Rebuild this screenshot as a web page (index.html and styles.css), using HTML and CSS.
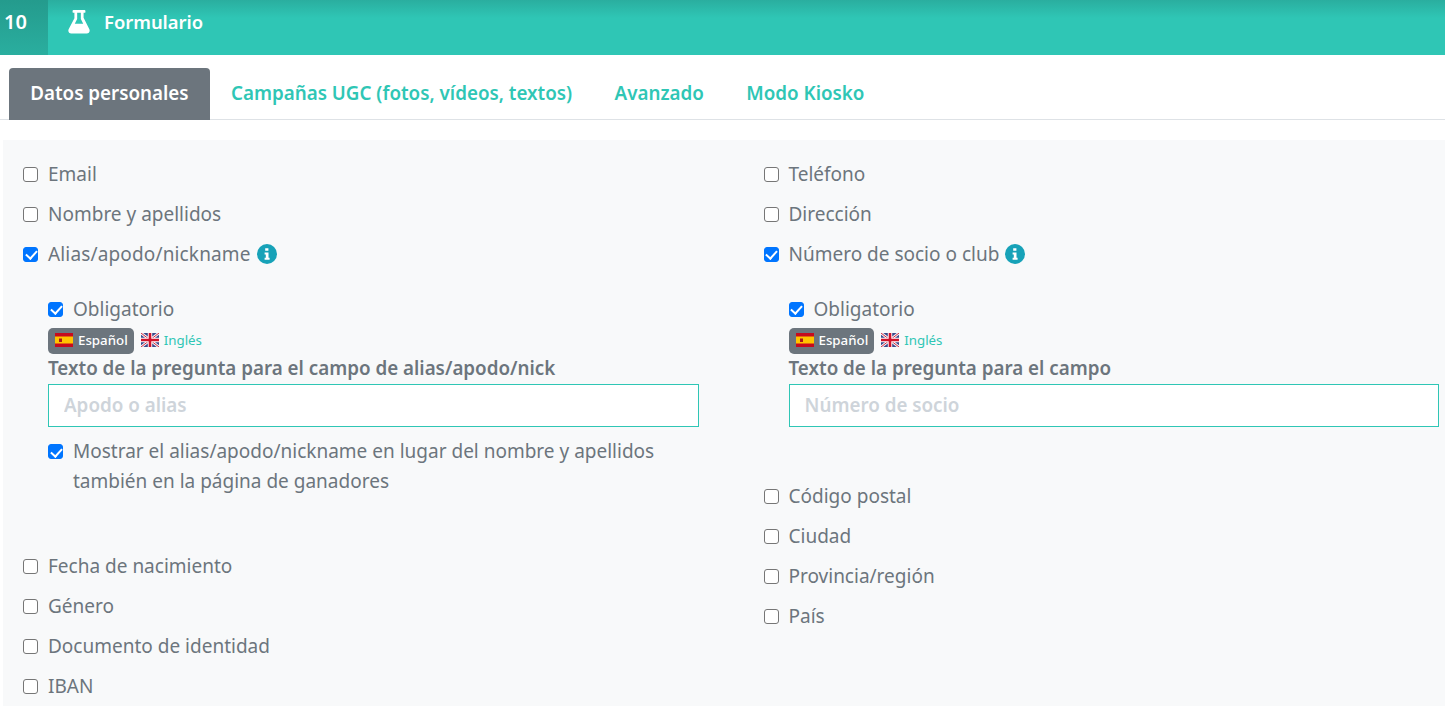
FILE: index.html
```html
<!DOCTYPE html>
<html lang="es">
<head>
  <meta charset="UTF-8">
  <meta name="viewport" content="width=device-width, initial-scale=1.0">
  <title>Formulario</title>
  <link rel="stylesheet" href="styles.css">
</head>
<body>

  <div class="section-header">
    <div class="section-number">10</div>
    <svg class="section-icon" viewBox="0 0 24 26"><path fill="#fff" d="M6 0.500h12a1 1 0 0 1 1 1v1a1 1 0 0 1-1 1h-1v5.500l6.300 12.500c1 2.200-.4 4.500-2.800 4.500H3.500c-2.400 0-3.800-2.300-2.800-4.500L7 9.500V3.500H6a1 1 0 0 1-1-1v-1a1 1 0 0 1 1-1zM10 3.500v6.800L7.400 15.500h9.200L14 10.300V3.500z"/></svg>
    <span class="section-title">Formulario</span>
  </div>

  <div class="tabs">
    <a class="tab active">Datos personales</a>
    <a class="tab">Campañas UGC (fotos, vídeos, textos)</a>
    <a class="tab">Avanzado</a>
    <a class="tab">Modo Kiosko</a>
  </div>

  <div class="panel">
    <div class="column">
      <label class="check"><input type="checkbox"><span>Email</span></label>
      <label class="check"><input type="checkbox"><span>Nombre y apellidos</span></label>
      <label class="check"><input type="checkbox" checked><span class="spaced">Alias/apodo/nickname</span>
        <svg class="info" viewBox="0 0 20 20"><circle cx="10" cy="10" r="10" fill="#17a2b8"/><path fill="#fff" d="M8.200 4.200h3.200v2.600H8.200zM7.600 8.400h3.900v5.400h1.100v2H7.600v-2h1.200v-3.400H7.600z"/></svg>
      </label>
      <div class="sub sub-alias">
        <label class="check small"><input type="checkbox" checked><span>Obligatorio</span></label>
        <div class="langs">
          <span class="lang active">
            <svg class="flag" viewBox="0 0 18 14"><rect width="18" height="14" fill="#c60b1e"/><rect y="3.500" width="18" height="7" fill="#ffc400"/><rect x="4" y="5.500" width="3" height="3.500" fill="#ad1519"/></svg>
            Español
          </span>
          <span class="lang">
            <svg class="flag" viewBox="0 0 18 14"><rect width="18" height="14" fill="#3a4a8c"/><path stroke="#f4f4f8" stroke-width="2.800" d="M0 0l18 14M18 0L0 14"/><path stroke="#d0112b" stroke-width="0.900" d="M0 0l18 14M18 0L0 14"/><path stroke="#fff" stroke-width="4.400" d="M9 0v14M0 7h18"/><path stroke="#d0112b" stroke-width="2.600" d="M9 0v14M0 7h18"/></svg>
            Inglés
          </span>
        </div>
        <div class="field-label">Texto de la pregunta para el campo de alias/apodo/nick</div>
        <input class="text-input" type="text" placeholder="Apodo o alias">
        <label class="check small multi"><input type="checkbox" checked><span>Mostrar el alias/apodo/nickname en lugar del nombre y apellidos también en la página de ganadores</span></label>
      </div>
      <label class="check"><input type="checkbox"><span>Fecha de nacimiento</span></label>
      <label class="check"><input type="checkbox"><span>Género</span></label>
      <label class="check"><input type="checkbox"><span>Documento de identidad</span></label>
      <label class="check"><input type="checkbox"><span>IBAN</span></label>
    </div>

    <div class="column">
      <label class="check"><input type="checkbox"><span>Teléfono</span></label>
      <label class="check"><input type="checkbox"><span>Dirección</span></label>
      <label class="check"><input type="checkbox" checked><span>Número de socio o club</span>
        <svg class="info" viewBox="0 0 20 20"><circle cx="10" cy="10" r="10" fill="#17a2b8"/><path fill="#fff" d="M8.200 4.200h3.200v2.600H8.200zM7.600 8.400h3.900v5.400h1.100v2H7.600v-2h1.200v-3.400H7.600z"/></svg>
      </label>
      <div class="sub sub-club">
        <label class="check small"><input type="checkbox" checked><span>Obligatorio</span></label>
        <div class="langs">
          <span class="lang active">
            <svg class="flag" viewBox="0 0 18 14"><rect width="18" height="14" fill="#c60b1e"/><rect y="3.500" width="18" height="7" fill="#ffc400"/><rect x="4" y="5.500" width="3" height="3.500" fill="#ad1519"/></svg>
            Español
          </span>
          <span class="lang">
            <svg class="flag" viewBox="0 0 18 14"><rect width="18" height="14" fill="#3a4a8c"/><path stroke="#f4f4f8" stroke-width="2.800" d="M0 0l18 14M18 0L0 14"/><path stroke="#d0112b" stroke-width="0.900" d="M0 0l18 14M18 0L0 14"/><path stroke="#fff" stroke-width="4.400" d="M9 0v14M0 7h18"/><path stroke="#d0112b" stroke-width="2.600" d="M9 0v14M0 7h18"/></svg>
            Inglés
          </span>
        </div>
        <div class="field-label">Texto de la pregunta para el campo</div>
        <input class="text-input" type="text" placeholder="Número de socio">
      </div>
      <label class="check"><input type="checkbox"><span>Código postal</span></label>
      <label class="check"><input type="checkbox"><span>Ciudad</span></label>
      <label class="check"><input type="checkbox"><span>Provincia/región</span></label>
      <label class="check"><input type="checkbox"><span>País</span></label>
    </div>
  </div>

</body>
</html>
```

FILE: styles.css
```css
* { margin: 0; padding: 0; box-sizing: border-box; }
html, body { height: 706px; overflow: hidden; }
body { font-family: 'Noto Sans', sans-serif; background: #fff; color: #6c757d; font-size: 19px; }

.section-header { display: flex; align-items: center; height: 55px; background: linear-gradient(to bottom, #2aae9f, #2fc6b5 18px); color: #fff; padding-bottom: 11px; }
.section-number { width: 48px; height: 55px; margin-bottom: -11px; padding: 9px 0 0 4px; background: linear-gradient(to bottom, #249b8d, #2aae9f); font-size: 20px; font-weight: 600; line-height: 25px; }
.section-icon { width: 22px; height: 25px; margin: -2px 0 0 20px; }
.section-title { margin: -2px 0 0 14px; font-size: 18.400px; font-weight: 600; }

.tabs { display: flex; height: 65px; padding: 13px 0 0 9px; border-bottom: 1px solid #dee2e6; }
.tab { padding: 0 21.200px; line-height: 50px; font-size: 18.800px; font-weight: 600; color: #2fc6b5; }
.tab.active { background: #6c757d; color: #fff; border-radius: 4px 4px 0 0; height: 52px; }

.panel { display: grid; grid-template-columns: 740.500px 1fr; margin: 20px 0 0 3px; padding: 14px 6px 0 20px; height: 566px; background: #f8f9fa; }

.check { display: flex; align-items: center; height: 40px; }
.check input { appearance: none; position: relative; width: 15px; height: 15px; margin-right: 10px; flex-shrink: 0; background: #fff; border: 1.300px solid #767676; border-radius: 3px; }
.check input:checked { background: #0075ff; border-color: #0075ff; }
.check input:checked::after { content: ""; position: absolute; left: 3.600px; top: 0.500px; width: 5px; height: 9px; border: solid #fff; border-width: 0 2px 2px 0; transform: rotate(42deg); }
.check span { line-height: 30px; }
.check .spaced { letter-spacing: 0.150px; }
.info { width: 20px; height: 20px; margin-left: 6px; }

.sub { padding: 20px 0 0 25px; }
.sub-alias { height: 272px; padding-right: 64.500px; }
.sub-club { height: 202px; }
.check.small { height: 30px; }
.check.multi { height: 60px; align-items: flex-start; margin-top: 9px; }
.check.multi input { margin-top: 8px; }

.langs { display: flex; align-items: center; gap: 7px; height: 26px; margin-top: 4px; font-size: 13.300px; color: #2fc6b5; }
.lang { display: flex; align-items: center; gap: 5px; height: 26px; padding-bottom: 2px; }
.lang.active { background: #6c757d; color: #fff; border-radius: 5px; padding: 0 6px 2px 7px; font-weight: 500; }
.flag { width: 18px; height: 14px; }

.field-label { margin-top: 1px; font-size: 18.800px; font-weight: 600; line-height: 26px; }
.text-input { display: block; width: 100%; height: 43px; margin-top: 3px; padding: 0 15px 2px; border: 1px solid #2fc6b5; background: #fff; font-family: inherit; font-size: 18.800px; }
.text-input::placeholder { color: #ced4da; font-weight: 600; }
```
